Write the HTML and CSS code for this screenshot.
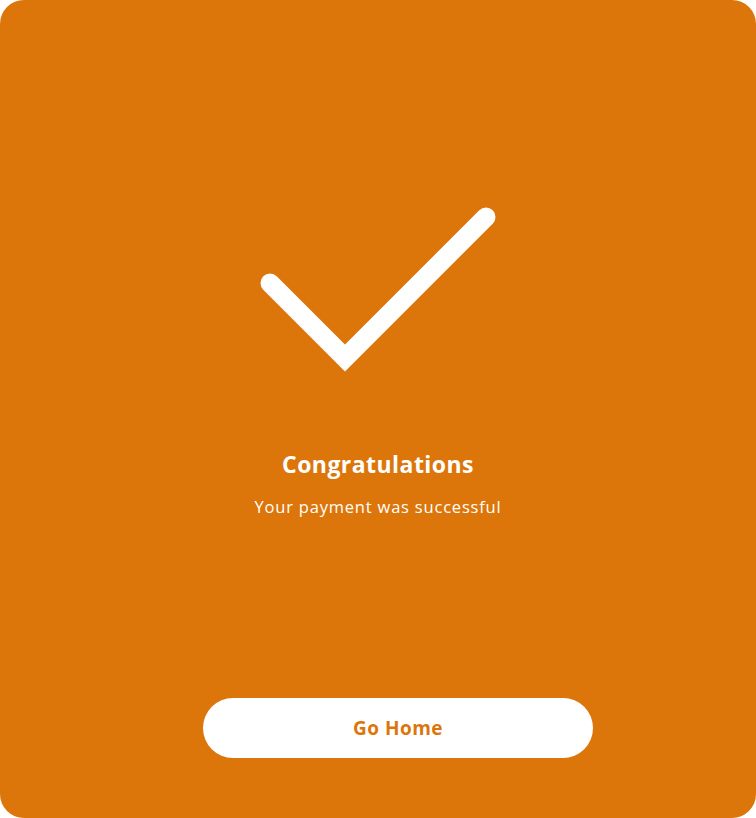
FILE: index.html
```html
<!DOCTYPE html>
<html lang="en">
<head>
<meta charset="utf-8">
<title>Payment successful</title>
<link rel="stylesheet" href="styles.css">
</head>
<body>
<main class="card">
  <svg class="check" width="240" height="170" viewBox="0 0 240 170" aria-hidden="true">
    <path d="M12 78 L87 153 L228 12" fill="none" stroke="#fff" stroke-width="19" stroke-linecap="round" stroke-linejoin="miter"/>
  </svg>
  <h1 class="title">Congratulations</h1>
  <p class="subtitle">Your payment was successful</p>
  <button class="btn" type="button">Go Home</button>
</main>
</body>
</html>
```
FILE: styles.css
```css
html, body {
  margin: 0;
  padding: 0;
  background: #fff;
}
.card {
  box-sizing: border-box;
  width: 756px;
  height: 818px;
  background: #dc760b;
  border-radius: 24px;
  display: flex;
  flex-direction: column;
  align-items: center;
  padding-top: 205px;
  font-family: "Open Sans", sans-serif;
  color: #fff;
}
.check {
  display: block;
}
.title {
  margin: 75px 0 0;
  font-size: 23px;
  line-height: 28px;
  font-weight: 700;
  letter-spacing: 0.45px;
}
.subtitle {
  margin: 19px 0 0;
  font-size: 16.5px;
  line-height: 20px;
  font-weight: 500;
  letter-spacing: 0.8px;
}
.btn {
  margin: 181px 0 0 40px;
  width: 390px;
  height: 60px;
  border: 0;
  border-radius: 30px;
  background: #fff;
  color: #dc760b;
  font-family: "Open Sans", sans-serif;
  font-size: 19px;
  font-weight: 700;
  letter-spacing: 0.5px;
}
```
